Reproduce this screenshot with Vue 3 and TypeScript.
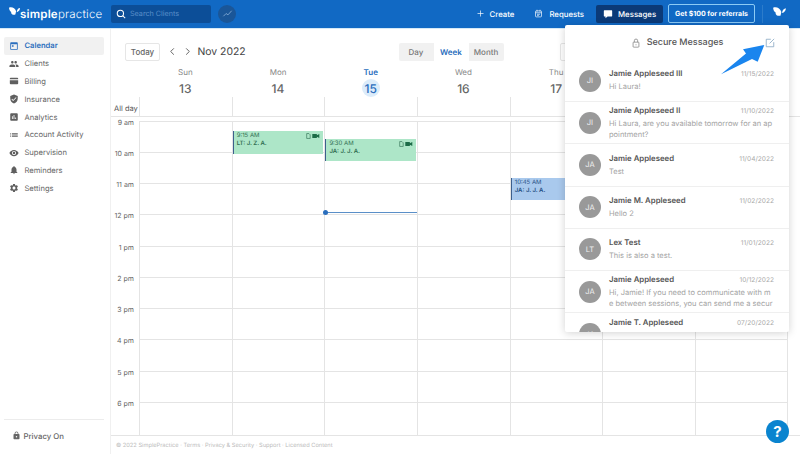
<script setup lang="ts">
interface NavItem {
  label: string
  icon: string
  active?: boolean
}

interface CalEvent {
  time: string
  who: string
  start: number
  tone: 'green' | 'blue'
  day: number
}

const icons = {
  calendar: 'M5 3h14a2 2 0 0 1 2 2v14a2 2 0 0 1-2 2H5a2 2 0 0 1-2-2V5a2 2 0 0 1 2-2zm0 5v11h14V8H5zm2 2h4v4H7z',
  clients:
    'M16 11c1.66 0 2.99-1.34 2.99-3S17.66 5 16 5c-1.66 0-3 1.34-3 3s1.34 3 3 3zm-8 0c1.66 0 2.99-1.34 2.99-3S9.66 5 8 5C6.34 5 5 6.34 5 8s1.34 3 3 3zm0 2c-2.33 0-7 1.17-7 3.5V19h14v-2.5c0-2.33-4.67-3.5-7-3.5zm8 0c-.29 0-.62.02-.97.05 1.16.84 1.97 1.97 1.97 3.45V19h6v-2.5c0-2.33-4.67-3.5-7-3.5z',
  billing: 'M4 4h16a2 2 0 0 1 2 2v2H2V6a2 2 0 0 1 2-2zm-2 6h20v8a2 2 0 0 1-2 2H4a2 2 0 0 1-2-2v-8z',
  insurance:
    'M12 1L3 5v6c0 5.55 3.84 10.74 9 12 5.16-1.26 9-6.45 9-12V5l-9-4zm-2 16l-4-4 1.41-1.41L10 14.17l6.59-6.59L18 9l-8 8z',
  analytics:
    'M19 3H5c-1.1 0-2 .9-2 2v14c0 1.1.9 2 2 2h14c1.1 0 2-.9 2-2V5c0-1.1-.9-2-2-2zM9 17H7v-7h2v7zm4 0h-2V7h2v10zm4 0h-2v-4h2v4z',
  activity: 'M3 13h2v-2H3v2zm0 4h2v-2H3v2zm0-8h2V7H3v2zm4 4h14v-2H7v2zm0 4h14v-2H7v2zM7 7v2h14V7H7z',
  supervision:
    'M12 4.5C7 4.5 2.73 7.61 1 12c1.73 4.39 6 7.5 11 7.5s9.27-3.11 11-7.5c-1.73-4.39-6-7.5-11-7.5zM12 17c-2.76 0-5-2.24-5-5s2.24-5 5-5 5 2.24 5 5-2.24 5-5 5zm0-8c-1.66 0-3 1.34-3 3s1.34 3 3 3 3-1.34 3-3-1.34-3-3-3z',
  reminders:
    'M12 22c1.1 0 2-.9 2-2h-4c0 1.1.89 2 2 2zm6-6v-5c0-3.07-1.64-5.64-4.5-6.32V4c0-.83-.67-1.5-1.5-1.5s-1.5.67-1.5 1.5v.68C7.63 5.36 6 7.92 6 11v5l-2 2v1h16v-1l-2-2z',
  settings:
    'M19.14 12.94c.04-.3.06-.61.06-.94 0-.32-.02-.64-.07-.94l2.03-1.58c.18-.14.23-.41.12-.61l-1.92-3.32c-.12-.22-.37-.29-.59-.22l-2.39.96c-.5-.38-1.03-.7-1.62-.94l-.36-2.54c-.04-.24-.24-.41-.48-.41h-3.84c-.24 0-.43.17-.47.41l-.36 2.54c-.59.24-1.13.57-1.62.94l-2.39-.96c-.22-.08-.47 0-.59.22L2.74 8.87c-.12.21-.08.47.12.61l2.03 1.58c-.05.3-.09.63-.09.94s.02.64.07.94l-2.03 1.58c-.18.14-.23.41-.12.61l1.92 3.32c.12.22.37.29.59.22l2.39-.96c.5.38 1.03.7 1.62.94l.36 2.54c.05.24.24.41.48.41h3.84c.24 0 .44-.17.47-.41l.36-2.54c.59-.24 1.13-.56 1.62-.94l2.39.96c.22.08.47 0 .59-.22l1.92-3.32c.12-.22.07-.47-.12-.61l-2.01-1.58zM12 15.6c-1.98 0-3.6-1.62-3.6-3.6s1.62-3.6 3.6-3.6 3.6 1.62 3.6 3.6-1.62 3.6-3.6 3.6z',
}

const navItems: NavItem[] = [
  { label: 'Calendar', icon: icons.calendar, active: true },
  { label: 'Clients', icon: icons.clients },
  { label: 'Billing', icon: icons.billing },
  { label: 'Insurance', icon: icons.insurance },
  { label: 'Analytics', icon: icons.analytics },
  { label: 'Account Activity', icon: icons.activity },
  { label: 'Supervision', icon: icons.supervision },
  { label: 'Reminders', icon: icons.reminders },
  { label: 'Settings', icon: icons.settings },
]

const butterfly =
  'M0 1C4-.8 9.500 1.500 11 6.500L9.800 11.500C6.500 12.600 2.600 10.600 3.400 7.400 1.400 6.400.2 3.800 0 1zM12 7C12.500 4 14.500 1.800 17 1.500 17 4.800 15 7 12 8z'

const days = [
  { name: 'Sun', num: 13 },
  { name: 'Mon', num: 14 },
  { name: 'Tue', num: 15, current: true },
  { name: 'Wed', num: 16 },
  { name: 'Thu', num: 17 },
  { name: 'Fri', num: 18 },
  { name: 'Sat', num: 19 },
]

const hours = ['9 am', '10 am', '11 am', '12 pm', '1 pm', '2 pm', '3 pm', '4 pm', '5 pm', '6 pm']

const events: CalEvent[] = [
  { time: '9:15 AM', who: 'LT: J. Z. A.', start: 9.25, tone: 'green', day: 1 },
  { time: '9:30 AM', who: 'JA: J. J. A.', start: 9.5, tone: 'green', day: 2 },
  { time: '10:45 AM', who: 'JA: J. J. A.', start: 10.75, tone: 'blue', day: 4 },
]

const eventsFor = (day: number) => events.filter((e) => e.day === day)

// 9:00 sits a little under the first grid line, one hour is 31.25px
const eventTop = (start: number) => `${2.7 + (start - 9) * 31.25}px`

const messages = [
  { initials: 'JI', name: 'Jamie Appleseed III', date: '11/15/2022', text: 'Hi Laura!' },
  { initials: 'JI', name: 'Jamie Appleseed II', date: '11/10/2022', text: 'Hi Laura, are you available tomorrow for an appointment?' },
  { initials: 'JA', name: 'Jamie Appleseed', date: '11/04/2022', text: 'Test' },
  { initials: 'JA', name: 'Jamie M. Appleseed', date: '11/02/2022', text: 'Hello 2' },
  { initials: 'LT', name: 'Lex Test', date: '11/01/2022', text: 'This is also a test.' },
  {
    initials: 'JA',
    name: 'Jamie Appleseed',
    date: '10/12/2022',
    text: 'Hi, Jamie! If you need to communicate with me between sessions, you can send me a secure message here.',
  },
  { initials: 'JA', name: 'Jamie T. Appleseed', date: '07/20/2022', text: 'Thanks for reaching out about your appointment.' },
]
</script>

<template>
  <div class="app">
    <header class="topbar">
      <div class="logo">
        <svg class="logo-mark" viewBox="0 0 17 12"><path :d="butterfly" /></svg>
        <span class="logo-text"><b>simple</b>practice</span>
      </div>
      <div class="search">
        <svg viewBox="0 0 24 24" class="search-icon"><circle cx="10.5" cy="10.5" r="7.5" /><path d="M16 16l6 6" /></svg>
        <span>Search Clients</span>
      </div>
      <button class="trend" type="button" aria-label="Trends">
        <svg viewBox="0 0 24 24"><path d="M3 18l6-6 4 3 8-9" /></svg>
      </button>

      <nav class="top-actions">
        <span class="top-link create">
          <svg viewBox="0 0 24 24" class="line-icon"><path d="M12 4v16M4 12h16" /></svg>
          Create
        </span>
        <span class="top-link requests">
          <svg viewBox="0 0 24 24" class="line-icon"><rect x="4" y="5" width="16" height="16" rx="2" /><path d="M8 2v5M16 2v5M4 10h16M8 14h8M8 17h5" /></svg>
          Requests
        </span>
        <span class="top-link messages">
          <svg viewBox="0 0 24 24" class="msg-icon"><path d="M3 3h18a1 1 0 0 1 1 1v13a1 1 0 0 1-1 1H11l-5 4v-4H3a1 1 0 0 1-1-1V4a1 1 0 0 1 1-1z" /></svg>
          Messages
        </span>
        <span class="referral">Get $100 for referrals</span>
        <span class="top-divider"></span>
        <svg class="top-butterfly" viewBox="0 0 17 12"><path :d="butterfly" /></svg>
      </nav>
    </header>

    <div class="body">
      <aside class="sidebar">
        <ul class="nav">
          <li v-for="item in navItems" :key="item.label" class="nav-item" :class="{ active: item.active }">
            <svg viewBox="0 0 24 24" fill-rule="evenodd"><path :d="item.icon" /></svg>
            <span>{{ item.label }}</span>
          </li>
        </ul>
        <div class="privacy">
          <svg viewBox="0 0 24 24"><path d="M18 8h-1V6a5 5 0 0 0-10 0v2H6a2 2 0 0 0-2 2v10a2 2 0 0 0 2 2h12a2 2 0 0 0 2-2V10a2 2 0 0 0-2-2zM9 6a3 3 0 0 1 6 0v2H9V6zm3 11a2 2 0 1 1 0-4 2 2 0 0 1 0 4z" /></svg>
          <span>Privacy On</span>
        </div>
      </aside>

      <main class="main">
        <div class="toolbar">
          <button class="today" type="button">Today</button>
          <svg class="chev" viewBox="0 0 10 10"><path d="M6.500 1.500L3 5l3.500 3.500" /></svg>
          <svg class="chev" viewBox="0 0 10 10"><path d="M3.500 1.500L7 5 3.500 8.500" /></svg>
          <h1 class="month">Nov 2022</h1>
          <div class="segment">
            <span>Day</span>
            <span class="on">Week</span>
            <span>Month</span>
          </div>
          <span class="filter"></span>
        </div>

        <div class="day-heads">
          <div v-for="d in days" :key="d.num" class="day-head" :class="{ current: d.current }">
            <span class="day-name">{{ d.name }}</span>
            <span class="day-num">{{ d.num }}</span>
          </div>
        </div>

        <div class="allday">
          <span class="allday-label">All day</span>
          <div v-for="d in days" :key="d.num" class="allday-cell"></div>
        </div>

        <div class="grid">
          <div class="gutter">
            <span v-for="h in hours" :key="h" class="hour-label">{{ h }}</span>
          </div>
          <div v-for="(d, i) in days" :key="d.num" class="day-col">
            <div v-for="h in hours" :key="h" class="slot"></div>
            <div
              v-for="e in eventsFor(i)"
              :key="e.time"
              class="event"
              :class="e.tone"
              :style="{ top: eventTop(e.start) }"
            >
              <div class="event-time">{{ e.time }}</div>
              <div class="event-who">{{ e.who }}</div>
              <svg class="event-icons" viewBox="0 0 20 8">
                <path class="doc" d="M1 .5h3.200L6 2.300v5.200H1z" />
                <path class="cam" d="M9 1h6.500v2L19 1v6l-3.500-2v2H9z" />
              </svg>
            </div>
            <div v-if="d.current" class="now-line"><span class="now-dot"></span></div>
          </div>
        </div>

        <footer class="legal">
          © 2022 SimplePractice · Terms · Privacy &amp; Security · Support · Licensed Content
        </footer>
      </main>
    </div>

    <section class="panel">
      <div class="panel-head">
        <svg class="panel-lock" viewBox="0 0 24 24"><rect x="5" y="10" width="14" height="12" rx="1.5" /><path d="M8 10V6.500a4 4 0 0 1 8 0V10M12 15v2.500" /></svg>
        <span>Secure Messages</span>
        <svg class="compose" viewBox="0 0 12 12"><path d="M7 1.500H1.500v9h9V5M5.500 6.500L11 1" /></svg>
      </div>
      <article v-for="m in messages" :key="m.name + m.date" class="msg">
        <span class="avatar">{{ m.initials }}</span>
        <div class="msg-body">
          <div class="msg-top">
            <span class="msg-name">{{ m.name }}</span>
            <span class="msg-date">{{ m.date }}</span>
          </div>
          <p class="msg-text">{{ m.text }}</p>
        </div>
      </article>
    </section>

    <svg class="pointer" viewBox="0 0 50 34"><path d="M48.300 1L41.700 17.700 36 15 5 30.300 30 9.500 27 5.300z" /></svg>

    <button class="help" type="button" aria-label="Help">?</button>
  </div>
</template>

<style>
html,
body {
  margin: 0;
  background: #fff;
}
</style>

<style scoped>
* {
  box-sizing: border-box;
}

.app {
  position: relative;
  display: flex;
  flex-direction: column;
  width: 800px;
  height: 454px;
  overflow: hidden;
  background: #fff;
  font-family: Inter, 'Noto Sans', sans-serif;
  color: #555;
  text-rendering: geometricPrecision;
}

/* top bar */
.topbar {
  display: flex;
  align-items: center;
  flex: none;
  height: 29px;
  padding: 0 0 1px 9px;
  background: #1169c4;
  border-bottom: 1px solid #d5e9f7;
  color: #fff;
}

.logo {
  display: flex;
  align-items: center;
  width: 102px;
}

.logo-mark {
  flex: none;
  width: 11px;
  height: 8px;
  margin-top: -6px;
  fill: #fff;
}

.logo-text {
  font-size: 11.500px;
  font-weight: 300;
  letter-spacing: 0.2px;
  white-space: nowrap;
}

.logo-text b {
  font-weight: 600;
}

.search {
  display: flex;
  align-items: center;
  gap: 4px;
  width: 100px;
  height: 18px;
  padding-left: 5px;
  border-radius: 2px;
  background: #0c4e98;
  font-size: 7.200px;
  color: #5b8fc8;
}

.search-icon {
  flex: none;
  width: 10px;
  height: 10px;
  fill: none;
  stroke: #fff;
  stroke-width: 2.500;
}

.trend {
  display: flex;
  align-items: center;
  justify-content: center;
  width: 18px;
  height: 18px;
  margin-left: 7px;
  padding: 0;
  border: 0;
  border-radius: 50%;
  background: #1a5698;
}

.trend svg {
  width: 11px;
  height: 11px;
  fill: none;
  stroke: #7ea6d2;
  stroke-width: 2;
}

.top-actions {
  display: flex;
  align-items: center;
  margin-left: auto;
  height: 100%;
  font-size: 7.800px;
  font-weight: 500;
}

.top-link {
  display: flex;
  align-items: center;
}

.line-icon {
  width: 9px;
  height: 9px;
  fill: none;
  stroke: #fff;
  stroke-width: 1.800;
}

.create {
  gap: 5px;
  margin-right: 20px;
}

.requests {
  gap: 6px;
  margin-right: 12px;
}

.messages {
  gap: 5px;
  width: 67px;
  height: 18px;
  padding-left: 7px;
  margin-right: 5px;
  border-radius: 2px;
  background: #0b3a78;
}

.msg-icon {
  width: 10px;
  height: 10px;
  fill: #fff;
}

.referral {
  display: flex;
  align-items: center;
  justify-content: center;
  width: 87px;
  height: 19px;
  border: 1px solid #8ccbf5;
  border-radius: 2px;
  font-size: 7px;
  font-weight: 700;
}

.top-divider {
  width: 1px;
  height: 18px;
  margin: 0 10px 0 7px;
  background: #2c7ccb;
}

.top-butterfly {
  width: 13px;
  height: 9px;
  margin: -4px 14px 0 0;
  fill: #fff;
}

.body {
  display: flex;
  flex: 1;
  min-height: 0;
}

/* sidebar */
.sidebar {
  display: flex;
  flex-direction: column;
  flex: none;
  width: 111px;
  padding: 8px 6px 0 4px;
  border-right: 1px solid #f0f0f0;
}

.nav {
  flex: 1;
  margin: 0;
  padding: 0;
  list-style: none;
}

.nav-item {
  display: flex;
  align-items: center;
  gap: 5.500px;
  height: 17.800px;
  padding-left: 5px;
  border-radius: 2px;
  font-size: 7.600px;
  color: #666;
}

.nav-item svg {
  flex: none;
  width: 10px;
  height: 10px;
  fill: #5f5f5f;
}

.nav-item.active {
  background: #f1f1f1;
  color: #2a6ebd;
  font-weight: 600;
}

.nav-item.active svg {
  fill: #2a6ebd;
}

.privacy {
  display: flex;
  align-items: center;
  gap: 3px;
  height: 35px;
  padding: 0 0 3px 7.500px;
  border-top: 1px solid #ececec;
  font-size: 7.800px;
  font-weight: 500;
  color: #666;
}

.privacy svg {
  width: 9px;
  height: 9px;
  fill: #666;
}

/* calendar */
.main {
  display: flex;
  flex-direction: column;
  flex: 1;
  min-width: 0;
}

.toolbar {
  display: flex;
  align-items: center;
  flex: none;
  height: 36px;
  padding: 9px 0 0 14px;
}

.today {
  width: 35px;
  height: 18px;
  padding: 0;
  border: 1px solid #e6e6e6;
  border-radius: 2px;
  background: #fff;
  font: 500 8px Inter, sans-serif;
  color: #666;
}

.chev {
  width: 9px;
  height: 9px;
  margin-left: 7.500px;
  fill: none;
  stroke: #555;
  stroke-width: 1;
}

.chev + .chev {
  margin-left: 6px;
}

.month {
  flex: none;
  width: 49px;
  margin: 0 0 0 6px;
  font-size: 10.400px;
  font-weight: 400;
  color: #444;
  white-space: nowrap;
}

.segment {
  display: flex;
  align-items: center;
  flex: none;
  height: 18px;
  margin-left: 152px;
  border-radius: 2px;
  background: #f1f1f1;
  font-size: 8px;
  font-weight: 500;
  color: #777;
}

.segment span {
  display: flex;
  align-items: center;
  justify-content: center;
  width: 35px;
  height: 100%;
}

.segment .on {
  background: #fff;
  color: #2a6ebd;
  font-weight: 600;
}

.filter {
  width: 40px;
  height: 18px;
  margin-left: 56px;
  border: 1px solid #e6e6e6;
  border-radius: 2px;
}

.day-heads {
  display: grid;
  grid-template-columns: repeat(7, 92.7px);
  flex: none;
  height: 32px;
  padding-left: 28px;
}

.day-head {
  display: flex;
  flex-direction: column;
  align-items: center;
  padding-top: 2px;
}

.day-name {
  font-size: 8px;
  line-height: 11px;
  color: #888;
}

.day-num {
  display: flex;
  align-items: center;
  justify-content: center;
  width: 18px;
  height: 18px;
  margin-top: 1px;
  border-radius: 50%;
  font-size: 12px;
  font-weight: 500;
  color: #666;
}

.day-head.current .day-name {
  color: #2a6ebd;
  font-weight: 600;
}

.day-head.current .day-num {
  background: #dcecfa;
  color: #2a6ebd;
}

.allday {
  display: grid;
  grid-template-columns: 28px repeat(7, 92.7px);
  flex: none;
  height: 20px;
  border-bottom: 1px solid #e4e4e4;
}

.allday-label {
  padding: 6.500px 0 0 3px;
  font-size: 7.500px;
  color: #555;
  white-space: nowrap;
}

.allday-cell {
  border-left: 1px solid #e4e4e4;
}

.grid {
  display: grid;
  grid-template-columns: 28px repeat(7, 92.7px);
  flex: 1;
  min-height: 0;
  margin-top: 3.500px;
  border-bottom: 1px solid #e4e4e4;
}

.gutter {
  display: flex;
  flex-direction: column;
}

.hour-label {
  flex: none;
  height: 31.250px;
  padding-right: 5px;
  font-size: 7px;
  line-height: 3px;
  text-align: right;
  color: #666;
}

.day-col {
  position: relative;
  display: flex;
  flex-direction: column;
  border-left: 1px solid #e4e4e4;
}

.day-col:last-child {
  border-right: 1px solid #e4e4e4;
}

.slot {
  flex: none;
  height: 31.250px;
  border-top: 1px solid #e4e4e4;
}

.slot:last-of-type {
  flex: 1;
}

.event {
  position: absolute;
  left: 0;
  right: 1px;
  height: 22.500px;
  padding: 1px 0 0 3px;
  border-left: 1.500px solid #3d5f8c;
  font-size: 6px;
  line-height: 8px;
}

.event.green {
  background: #ade6c8;
  color: #2f6d51;
}

.event.blue {
  background: #a9c9ed;
  color: #244f83;
}

.event-who {
  font-weight: 600;
}

.event-icons {
  position: absolute;
  top: 2px;
  right: 3px;
  width: 14px;
  height: 6px;
}

.doc {
  fill: none;
  stroke: #2f6d51;
  stroke-width: 0.900;
}

.cam {
  fill: #1c6b47;
}

.now-line {
  position: absolute;
  top: 91px;
  left: 0;
  right: 0;
  height: 1.500px;
  background: #5a8fc8;
}

.now-dot {
  position: absolute;
  top: -1.500px;
  left: -2.500px;
  width: 5px;
  height: 5px;
  border-radius: 50%;
  background: #2a6ebd;
}

.legal {
  flex: none;
  height: 18px;
  padding: 6px 0 0 5px;
  font-size: 5.700px;
  color: #bbb;
}

/* message panel */
.panel {
  position: absolute;
  top: 25px;
  left: 565px;
  width: 224px;
  height: 307px;
  overflow: hidden;
  border-radius: 2px;
  background: #fff;
  box-shadow: 0 1px 8px rgba(0, 0, 0, 0.18);
}

.panel-head {
  position: relative;
  display: flex;
  align-items: center;
  justify-content: center;
  gap: 6px;
  height: 35px;
  font-size: 9px;
  font-weight: 500;
  color: #555;
}

.panel-lock {
  width: 10px;
  height: 10px;
  fill: none;
  stroke: #666;
  stroke-width: 1.500;
}

.compose {
  position: absolute;
  top: 13px;
  right: 14px;
  width: 10px;
  height: 10px;
  fill: none;
  stroke: #8aa9c4;
  stroke-width: 1;
}

.msg {
  display: flex;
  align-items: center;
  gap: 8px;
  height: 42.200px;
  padding: 0 15px 0 14px;
  border-bottom: 1px solid #efefef;
}

.msg:last-child {
  align-items: flex-start;
  padding-top: 4px;
}

.avatar {
  display: flex;
  align-items: center;
  justify-content: center;
  flex: none;
  width: 22px;
  height: 22px;
  border-radius: 50%;
  background: #999;
  font-size: 7.500px;
  color: #eee;
}

.msg:last-child .avatar {
  margin-top: 6px;
}

.msg-body {
  flex: 1;
  min-width: 0;
}

.msg-top {
  display: flex;
  justify-content: space-between;
  align-items: baseline;
  line-height: 11px;
}

.msg-name {
  font-size: 7.800px;
  font-weight: 600;
  color: #555;
}

.msg-date {
  font-size: 6.600px;
  color: #aaa;
}

/* two lines at most, cut mid-word with no ellipsis */
.msg-text {
  max-height: 23px;
  overflow: hidden;
  margin: 1px 0 0;
  font-size: 7.500px;
  line-height: 11.500px;
  color: #a3a3a3;
  word-break: break-all;
}

.pointer {
  position: absolute;
  top: 44px;
  left: 716px;
  width: 50px;
  height: 34px;
  fill: #1a85ee;
}

.help {
  position: absolute;
  top: 420px;
  left: 766px;
  width: 23px;
  height: 23px;
  padding: 0;
  border: 0;
  border-radius: 50%;
  background: #0a84cf;
  font: 700 15px Inter, sans-serif;
  color: #fff;
}
</style>
